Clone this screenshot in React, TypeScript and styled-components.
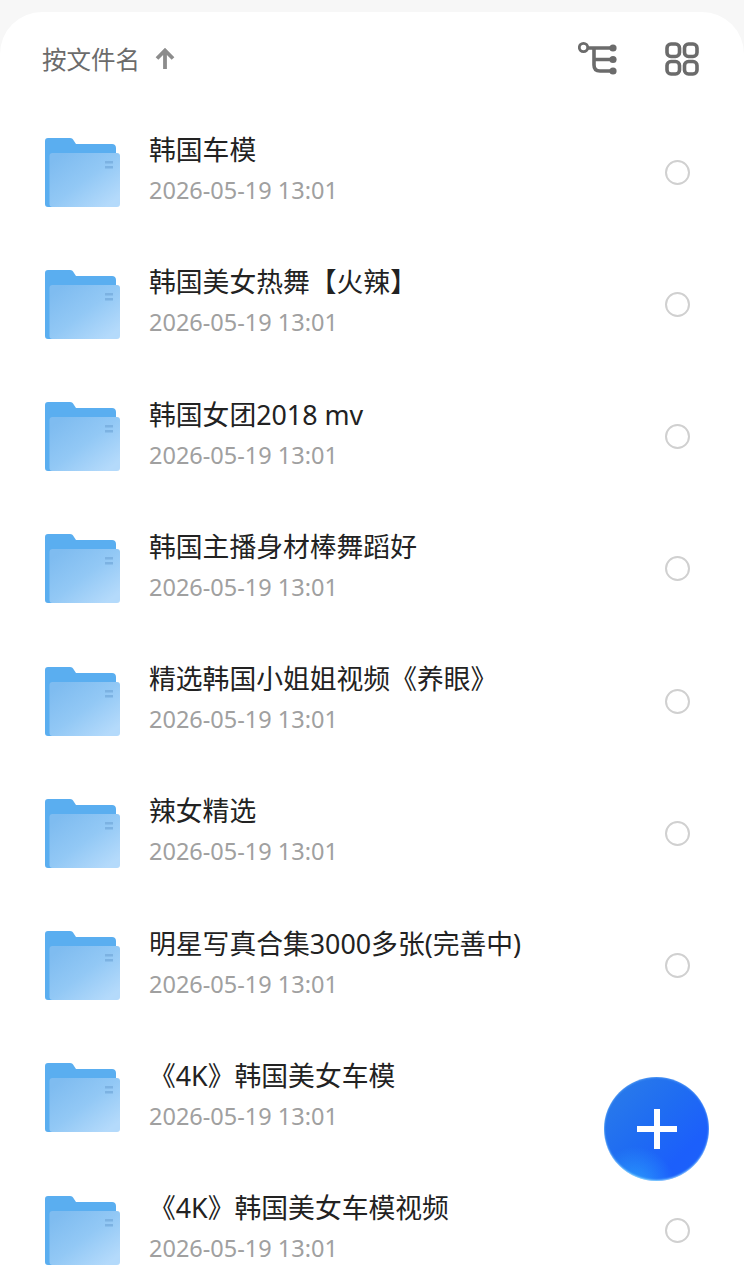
import * as React from 'react';
import styled, { createGlobalStyle } from 'styled-components';

const GlobalStyle = createGlobalStyle`
  html, body {
    margin: 0;
    padding: 0;
    background: #f7f7f7;
    overflow: hidden;
  }
`

const Screen = styled.div`
  position: relative;
  width: 744px;
  height: 1279px;
  padding-top: 12px;
  box-sizing: border-box;
  overflow: hidden;
  font-family: "Noto Sans", "Noto Sans CJK SC", sans-serif;
`

const Sheet = styled.div`
  height: 1267px;
  background: #fff;
  border-radius: 42px 42px 0 0;
  overflow: hidden;
`

const Toolbar = styled.div`
  height: 94px;
  box-sizing: border-box;
  padding: 0 45px 0 42px;
  display: flex;
  align-items: center;
  justify-content: space-between;
`

const SortButton = styled.div`
  display: flex;
  align-items: center;
  gap: 14px;
  font-size: 24.5px;
  color: #6b6b6b;
  margin-top: -1px;
`

const ToolIcons = styled.div`
  display: flex;
  align-items: center;
  gap: 47px;
`

const Row = styled.div`
  height: 132.25px;
  box-sizing: border-box;
  padding: 0 54px 0 45px;
  display: flex;
  align-items: center;
`

const Thumb = styled.svg`
  width: 75px;
  height: 70px;
  flex: none;
  margin: 1px 29px 0 0;
`

const Info = styled.div`
  flex: 1;
  min-width: 0;
  display: flex;
  flex-direction: column;
  gap: 7px;
  margin-bottom: 7px;
`

const Title = styled.div`
  font-size: 26.8px;
  line-height: 36px;
  color: #222;
  white-space: nowrap;
`

const DateText = styled.div`
  font-size: 23.5px;
  line-height: 30px;
  color: #a0a0a0;
`

const Radio = styled.div`
  width: 25px;
  height: 25px;
  flex: none;
  box-sizing: border-box;
  border: 2px solid #d0d0d0;
  border-radius: 50%;
`

const Fab = styled.div`
  position: absolute;
  left: 604px;
  top: 1077px;
  width: 105px;
  height: 104px;
  border-radius: 50%;
  display: flex;
  align-items: center;
  justify-content: center;
  background:
    radial-gradient(circle at 30% 105%, rgba(50, 190, 255, 0.6) 0%, rgba(50, 190, 255, 0) 30%),
    linear-gradient(135deg, #2c7ee8 0%, #1f6cf2 45%, #1c5ffb 75%, #1c62fa 100%);
  box-shadow: inset 0 -1px 2px rgba(170, 240, 255, 0.8), inset 0 1px 2px rgba(130, 195, 255, 0.4);
`

const FolderIcon = ({ id }: { id: string }) => (
  <Thumb viewBox="0 0 75 70">
    <defs>
      <linearGradient id={id} x1="0.1" y1="0.1" x2="0.9" y2="0.9">
        <stop offset="0" stopColor="#7fbcf0" />
        <stop offset="0.5" stopColor="#92c8f5" />
        <stop offset="1" stopColor="#b4dafb" />
      </linearGradient>
    </defs>
    <path
      d="M3 0H25C27 0 28 1 29 3L31 6H67C69.5 6 71 7.5 71 10V66C71 68 69 69 67 69H3C1 69 0 68 0 66V3C0 1 1 0 3 0Z"
      fill="#5aaef0"
    />
    <rect x="4.5" y="15" width="70.5" height="54" rx="3" fill={`url(#${id})`} />
    <rect x="60" y="23" width="8" height="2.5" fill="#7cb2e2" />
    <rect x="60" y="28" width="8" height="2.5" fill="#7cb2e2" />
  </Thumb>
)

const files = [
  '韩国车模',
  '韩国美女热舞【火辣】',
  '韩国女团2018 mv',
  '韩国主播身材棒舞蹈好',
  '精选韩国小姐姐视频《养眼》',
  '辣女精选',
  '明星写真合集3000多张(完善中)',
  '《4K》韩国美女车模',
  '《4K》韩国美女车模视频',
]

export default function App() {
  return (
    <Screen>
      <GlobalStyle />
      <Sheet>
        <Toolbar>
          <SortButton>
            按文件名
            <svg width="22" height="24" viewBox="0 0 22 24">
              <path d="M11 22V4M3 11.5L11 3.5L19 11.5" fill="none" stroke="#8c8c8c" strokeWidth="3.8" />
            </svg>
          </SortButton>
          <ToolIcons>
            <svg width="40" height="36" viewBox="0 0 40 36">
              <circle cx="5.5" cy="6.5" r="4.2" fill="none" stroke="#6b6b6b" strokeWidth="2.8" />
              <path
                d="M10 7H35M16 7V24C16 28 18 30 22 30H35M16 18.5H35"
                fill="none"
                stroke="#6b6b6b"
                strokeWidth="3.6"
              />
              <circle cx="35" cy="7" r="3.6" fill="#6b6b6b" />
              <circle cx="35" cy="18.5" r="3.6" fill="#6b6b6b" />
              <circle cx="35" cy="30" r="3.6" fill="#6b6b6b" />
            </svg>
            <svg width="34" height="34" viewBox="0 0 34 34">
              <rect x="2" y="2" width="12.5" height="12.5" rx="4" fill="none" stroke="#6b6b6b" strokeWidth="3.6" />
              <rect x="19.5" y="2" width="12.5" height="12.5" rx="4" fill="none" stroke="#6b6b6b" strokeWidth="3.6" />
              <rect x="2" y="19.5" width="12.5" height="12.5" rx="4" fill="none" stroke="#6b6b6b" strokeWidth="3.6" />
              <rect x="19.5" y="19.5" width="12.5" height="12.5" rx="4" fill="none" stroke="#6b6b6b" strokeWidth="3.6" />
            </svg>
          </ToolIcons>
        </Toolbar>
        {files.map((name, i) => (
          <Row key={name}>
            <FolderIcon id={`folder-${i}`} />
            <Info>
              <Title>{name}</Title>
              <DateText>2026-05-19 13:01</DateText>
            </Info>
            <Radio />
          </Row>
        ))}
      </Sheet>
      <Fab>
        <svg width="42" height="42" viewBox="0 0 42 42">
          <path d="M21 1V41M1 21H41" stroke="#fff" strokeWidth="6" />
        </svg>
      </Fab>
    </Screen>
  )
}
